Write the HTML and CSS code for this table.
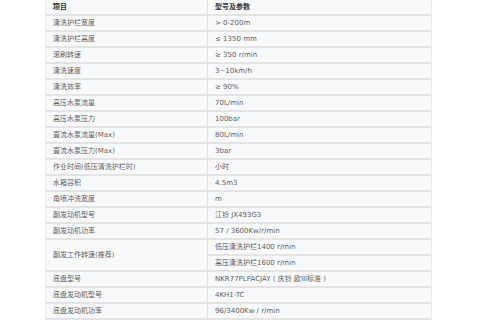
FILE: index.html
```html
<!DOCTYPE html>
<html lang="zh">
<head>
<meta charset="utf-8">
<link rel="stylesheet" href="styles.css">
</head>
<body>
<table class="spec">
  <tr class="head"><td class="k">项目</td><td class="v">型号及参数</td></tr>
  <tr><td class="k">清洗护栏宽度</td><td class="v">&gt; 0-200m</td></tr>
  <tr><td class="k">清洗护栏高度</td><td class="v">≤ 1350 mm</td></tr>
  <tr><td class="k">滚刷转速</td><td class="v">≥ 350 r/min</td></tr>
  <tr><td class="k">清洗速度</td><td class="v">3~10km/h</td></tr>
  <tr><td class="k">清洗效率</td><td class="v">≥ 90%</td></tr>
  <tr><td class="k">高压水泵流量</td><td class="v">70L/min</td></tr>
  <tr><td class="k">高压水泵压力</td><td class="v">100bar</td></tr>
  <tr><td class="k">直流水泵流量(Max)</td><td class="v">80L/min</td></tr>
  <tr><td class="k">直流水泵压力(Max)</td><td class="v">3bar</td></tr>
  <tr><td class="k">作业时间(低压清洗护栏时)</td><td class="v">小时</td></tr>
  <tr><td class="k">水箱容积</td><td class="v">4.5m3</td></tr>
  <tr><td class="k">角喷冲洗宽度</td><td class="v">m</td></tr>
  <tr><td class="k">副发动机型号</td><td class="v">江铃 JX493G3</td></tr>
  <tr><td class="k">副发动机功率</td><td class="v">57 / 3600Kw/r/min</td></tr>
  <tr><td class="k" rowspan="2">副发工作转速(推荐)</td><td class="v">低压清洗护栏1400 r/min</td></tr>
  <tr><td class="v">高压清洗护栏1600 r/min</td></tr>
  <tr><td class="k">底盘型号</td><td class="v">NKR77PLPACJAY ( 庆铃 欧III标准 )</td></tr>
  <tr><td class="k">底盘发动机型号</td><td class="v">4KH1-TC</td></tr>
  <tr><td class="k">底盘发动机功率</td><td class="v">96/3400Kw / r/min</td></tr>
</table>
</body>
</html>
```
FILE: styles.css
```css
html, body {
  margin: 0;
  padding: 0;
  background: #ffffff;
}
body {
  height: 320px;
  overflow: hidden;
}
.spec {
  margin-left: 45px;
  width: 387px;
  border-collapse: separate;
  border-spacing: 0;
  table-layout: fixed;
  font-family: "DejaVu Sans", "Noto Sans CJK SC", sans-serif;
  font-size: 7px;
  color: #5e5e5e;
  border-left: 1px solid #ececec;
  border-right: 1px solid #ececec;
}
.spec td {
  height: 14px;
  line-height: 14px;
  padding: 0 0 0 7px;
  background: #f8f9fa;
  border-bottom: 2px solid #e3e3e3;
  white-space: nowrap;
  vertical-align: middle;
}
.spec td.k {
  width: 154px;
  border-right: 1px solid #e3e3e3;
}
.spec .head td {
  font-weight: bold;
  color: #333333;
}
```
